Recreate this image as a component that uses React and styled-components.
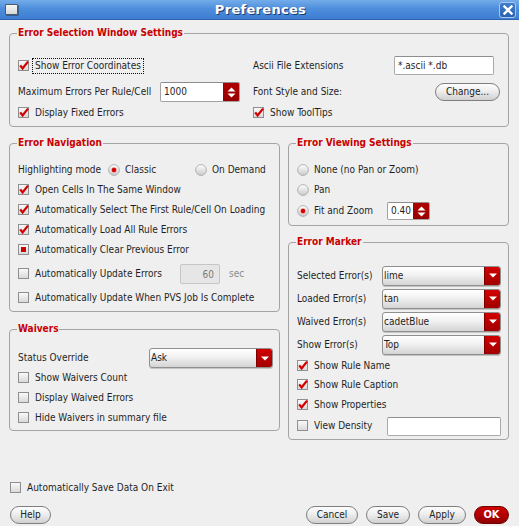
import React, { useId } from 'react';
import styled, { createGlobalStyle, css } from 'styled-components';

const FONT = `"DejaVu Sans Condensed", "DejaVu Sans", "Liberation Sans", sans-serif`;

const GlobalStyle = createGlobalStyle`
  html, body { margin: 0; padding: 0; background: #efefef; }
  body { font-family: ${FONT}; }
  * { box-sizing: border-box; }
`;

const Window = styled.div`
  width: 519px;
  height: 526px;
  display: flex;
  flex-direction: column;
  background: #efefef;
  color: #1f1f1f;
  font-family: ${FONT};
  font-size: 10px;
  line-height: 12px;
  overflow: hidden;
`;

const TitleBar = styled.div`
  flex: none;
  height: 20px;
  display: grid;
  grid-template-columns: 1fr auto 1fr;
  align-items: center;
  padding: 0 3px 0 5px;
  background: linear-gradient(#74ace9 0%, #4e8edc 45%, #3e7ed2 100%);
  border-bottom: 1px solid #2e64b0;
`;

const WindowIcon = styled.span`
  justify-self: start;
  width: 13px;
  height: 11px;
  border: 1px solid #505a66;
  border-radius: 1px;
  background: linear-gradient(#f6f6f6, #d6d6d6);
  box-shadow: 1px 1px 0 rgba(0, 0, 0, 0.3);
`;

const Title = styled.div`
  color: #ffffff;
  font-family: "DejaVu Sans", sans-serif;
  font-weight: bold;
  font-size: 13px;
  letter-spacing: 0.3px;
  text-shadow: 1px 1px 0 #1b3b6e;
`;

const CloseButton = styled.span`
  justify-self: end;
  width: 17px;
  height: 16px;
  display: flex;
  align-items: center;
  justify-content: center;
  border: 1px solid #a8c7ef;
  border-radius: 3px;
  background: linear-gradient(#3f7dcd, #2c63b0);
`;

const Body = styled.div`
  flex: 1;
  min-height: 0;
  display: flex;
  flex-direction: column;
  padding: 6px 10px 0 9px;
`;

const Group = styled.fieldset`
  margin: 0;
  min-width: 0;
  border: 1px solid #a4a4a4;
  border-radius: 4px;
  padding: ${(p) => p.$pt}px ${(p) => p.$pr ?? 8}px ${(p) => p.$pb}px 8px;
`;

const Legend = styled.legend`
  padding: 0 1px;
  margin-left: -1px;
  color: #c80000;
  font-weight: bold;
  font-size: 10px;
  line-height: 14px;
`;

const TopGrid = styled.div`
  display: grid;
  grid-template-columns: 235px 1fr;
  grid-template-rows: 27px 26px 16px;
  align-items: center;
`;

const Columns = styled.div`
  display: grid;
  grid-template-columns: 271px 221px;
  column-gap: 8px;
  margin-top: 9px;
  align-items: start;
`;

const Column = styled.div`
  display: flex;
  flex-direction: column;
  gap: ${(p) => p.$gap}px;
`;

const Row = styled.div`
  display: flex;
  align-items: center;
  height: ${(p) => p.$h ?? 20}px;
  white-space: nowrap;
`;

const Label = styled.span`
  flex: none;
  width: ${(p) => (p.$w ? `${p.$w}px` : 'auto')};
  white-space: nowrap;
`;

const ItemText = styled.span`
  white-space: nowrap;
  ${(p) =>
    p.$focused &&
    css`
      border: 1px dotted #111;
      padding: 1px 2px;
      margin-left: -3px;
    `}
`;

const Unit = styled.span`
  margin-left: 9px;
  color: #8c8c8c;
`;

const Mark = styled.svg`
  flex: none;
  margin-right: 5px;
  overflow: visible;
`;

const TextInput = styled.input`
  flex: none;
  width: ${(p) => p.$w}px;
  height: ${(p) => p.$h}px;
  margin: 0;
  padding: 0 3px;
  border: 1px solid #aaaaaa;
  border-top-color: #8e8e8e;
  border-radius: 2px;
  background: #ffffff;
  font: inherit;
  color: #1f1f1f;
  outline: none;
  ${(p) =>
    p.disabled &&
    css`
      background: #e6e6e6;
      border-color: #c6c6c6;
      color: #7a7a7a;
      text-align: right;
      padding-right: 5px;
    `}
`;

const SpinFrame = styled.div`
  flex: none;
  display: flex;
  width: ${(p) => p.$w}px;
  height: ${(p) => p.$h}px;
  border: 1px solid #a2a2a2;
  border-top-color: #8c8c8c;
  border-radius: 2px;
  background: #ffffff;
  overflow: hidden;
`;

const SpinValue = styled.span`
  flex: 1;
  display: flex;
  align-items: center;
  padding-left: 3px;
`;

const SpinArrows = styled.span`
  flex: none;
  width: 16px;
  display: flex;
  align-items: center;
  justify-content: center;
  background: linear-gradient(#b00000, #960000);
`;

const SelectFrame = styled.div`
  flex: none;
  display: flex;
  width: ${(p) => p.$w}px;
  height: 20px;
  border: 1px solid #8f8f8f;
  border-radius: 3px;
  background: linear-gradient(#ffffff 0%, #f3f3f3 40%, #d4d4d4 100%);
  box-shadow: 0 1px 0 #c4c4c4;
  overflow: hidden;
`;

const SelectValue = styled.span`
  flex: 1;
  display: flex;
  align-items: center;
  padding-left: 1px;
`;

const SelectArrow = styled.span`
  flex: none;
  width: 16px;
  display: flex;
  align-items: center;
  justify-content: center;
  border-left: 1px solid #7c0000;
  background: linear-gradient(#d20000, #a20000);
`;

const Button = styled.button`
  flex: none;
  width: ${(p) => p.$w}px;
  height: 18px;
  margin: 0;
  padding: 0;
  border: 1px solid #7f7f7f;
  border-radius: 9px;
  background: linear-gradient(#fdfdfd 0%, #eeeeee 45%, #d0d0d0 100%);
  font: inherit;
  color: #222222;
  ${(p) =>
    p.$primary &&
    css`
      border-color: #6e0000;
      background: linear-gradient(#d00000 0%, #b40000 50%, #8e0000 100%);
      color: #ffffff;
      font-weight: bold;
      font-size: 11px;
    `}
`;

const Footer = styled.div`
  flex: none;
  display: flex;
  flex-direction: column;
  padding: 0 10px 2px 10px;
`;

const ButtonBar = styled.div`
  display: flex;
  justify-content: space-between;
  align-items: center;
  height: 18px;
  margin-top: 10px;
`;

const ButtonGroup = styled.div`
  display: flex;
  gap: 8px;
`;

const RadioOption = styled.span`
  flex: none;
  display: flex;
  align-items: center;
  width: ${(p) => (p.$w ? `${p.$w}px` : 'auto')};
`;

function useSafeId() {
  return 'g' + useId().replace(/[^a-zA-Z0-9]/g, '');
}

function Checkbox({ state = 'off' }) {
  const id = useSafeId();
  return (
    <Mark width="12" height="12" viewBox="0 0 12 12">
      <defs>
        <linearGradient id={id} x1="0" y1="0" x2="0" y2="1">
          <stop offset="0" stopColor="#fbfbfb" />
          <stop offset="1" stopColor="#d8d8d8" />
        </linearGradient>
      </defs>
      <rect x="0.5" y="0.5" width="10" height="10" fill={`url(#${id})`} stroke="#8f8f8f" />
      {state === 'on' && (
        <path d="M2.2 5.4 L4.6 8.4 L10 1.6" fill="none" stroke="#d20000" strokeWidth="2.3" strokeLinejoin="miter" />
      )}
      {state === 'partial' && <rect x="3" y="3" width="5" height="5" fill="#d20000" />}
    </Mark>
  );
}

function Radio({ on }) {
  const id = useSafeId();
  return (
    <Mark width="12" height="12" viewBox="0 0 12 12">
      <defs>
        <linearGradient id={id} x1="0" y1="0" x2="0" y2="1">
          <stop offset="0" stopColor="#ffffff" />
          <stop offset="1" stopColor="#c9c9c9" />
        </linearGradient>
      </defs>
      <circle cx="6" cy="6" r="5.4" fill={`url(#${id})`} stroke="#a5a5a5" strokeWidth="0.8" />
      {on && <circle cx="6" cy="6" r="3" fill="#f2b3b3" />}
      {on && <circle cx="6" cy="6" r="2.2" fill="#d40000" />}
    </Mark>
  );
}

function CheckItem({ state = 'off', focused, h, children }) {
  return (
    <Row $h={h}>
      <Checkbox state={state} />
      <ItemText $focused={focused}>{children}</ItemText>
    </Row>
  );
}

function SpinBox({ value, w, h }) {
  return (
    <SpinFrame $w={w} $h={h}>
      <SpinValue>{value}</SpinValue>
      <SpinArrows>
        <svg width="9" height="13" viewBox="0 0 9 13">
          <polygon points="0.5,5.5 4.5,1.5 8.5,5.5" fill="#ffffff" />
          <polygon points="0.5,7.5 4.5,11.5 8.5,7.5" fill="#ffffff" />
        </svg>
      </SpinArrows>
    </SpinFrame>
  );
}

function Select({ value, w }) {
  return (
    <SelectFrame $w={w}>
      <SelectValue>{value}</SelectValue>
      <SelectArrow>
        <svg width="8" height="5" viewBox="0 0 8 5">
          <polygon points="0,0.5 8,0.5 4,4.5" fill="#ffffff" />
        </svg>
      </SelectArrow>
    </SelectFrame>
  );
}

export default function App() {
  return (
    <>
      <GlobalStyle />
      <Window>
        <TitleBar>
          <WindowIcon />
          <Title>Preferences</Title>
          <CloseButton aria-label="Close">
            <svg width="10" height="10" viewBox="0 0 10 10">
              <path d="M1.5 1.5 L8.5 8.5 M8.5 1.5 L1.5 8.5" stroke="#ffffff" strokeWidth="2.4" strokeLinecap="square" />
            </svg>
          </CloseButton>
        </TitleBar>

        <Body>
          <Group $pt={12} $pb={5}>
            <Legend>Error Selection Window Settings</Legend>
            <TopGrid>
              <CheckItem state="on" focused>Show Error Coordinates</CheckItem>
              <Row>
                <Label $w={141}>Ascii File Extensions</Label>
                <TextInput $w={100} $h={19} defaultValue="*.ascii *.db" />
              </Row>
              <Row>
                <Label $w={142}>Maximum Errors Per Rule/Cell</Label>
                <SpinBox value="1000" w={80} h={20} />
              </Row>
              <Row>
                <Label $w={182}>Font Style and Size:</Label>
                <Button $w={65}>Change...</Button>
              </Row>
              <CheckItem state="on" h={16}>Display Fixed Errors</CheckItem>
              <CheckItem state="on" h={16}>Show ToolTips</CheckItem>
            </TopGrid>
          </Group>

          <Columns>
            <Column $gap={10}>
              <Group $pt={10} $pb={3} $pr={6}>
                <Legend>Error Navigation</Legend>
                <Row>
                  <Label $w={90}>Highlighting mode</Label>
                  <RadioOption $w={87}>
                    <Radio on />
                    Classic
                  </RadioOption>
                  <RadioOption>
                    <Radio />
                    On Demand
                  </RadioOption>
                </Row>
                <CheckItem state="on">Open Cells In The Same Window</CheckItem>
                <CheckItem state="on">Automatically Select The First Rule/Cell On Loading</CheckItem>
                <CheckItem state="on">Automatically Load All Rule Errors</CheckItem>
                <CheckItem state="partial">Automatically Clear Previous Error</CheckItem>
                <Row $h={28}>
                  <Checkbox />
                  <Label $w={145}>Automatically Update Errors</Label>
                  <TextInput $w={40} $h={20} disabled defaultValue="60" />
                  <Unit>sec</Unit>
                </Row>
                <CheckItem>Automatically Update When PVS Job Is Complete</CheckItem>
              </Group>

              <Group $pt={12} $pb={2} $pr={6}>
                <Legend>Waivers</Legend>
                <Row>
                  <Label $w={131}>Status Override</Label>
                  <Select value="Ask" w={124} />
                </Row>
                <CheckItem>Show Waivers Count</CheckItem>
                <CheckItem>Display Waived Errors</CheckItem>
                <CheckItem>Hide Waivers in summary file</CheckItem>
              </Group>
            </Column>

            <Column $gap={9}>
              <Group $pt={10} $pb={3} $pr={7}>
                <Legend>Error Viewing Settings</Legend>
                <Row>
                  <Radio />
                  <Label>None (no Pan or Zoom)</Label>
                </Row>
                <Row>
                  <Radio />
                  <Label>Pan</Label>
                </Row>
                <Row $h={22}>
                  <Radio on />
                  <Label $w={73}>Fit and Zoom</Label>
                  <SpinBox value="0.40" w={43} h={18} />
                </Row>
              </Group>

              <Group $pt={15} $pb={2} $pr={7}>
                <Legend>Error Marker</Legend>
                <Row $h={23}>
                  <Label $w={85}>Selected Error(s)</Label>
                  <Select value="lime" w={119} />
                </Row>
                <Row $h={23}>
                  <Label $w={85}>Loaded Error(s)</Label>
                  <Select value="tan" w={119} />
                </Row>
                <Row $h={23}>
                  <Label $w={85}>Waived Error(s)</Label>
                  <Select value="cadetBlue" w={119} />
                </Row>
                <Row $h={23}>
                  <Label $w={85}>Show Error(s)</Label>
                  <Select value="Top" w={119} />
                </Row>
                <CheckItem state="on" h={19}>Show Rule Name</CheckItem>
                <CheckItem state="on">Show Rule Caption</CheckItem>
                <CheckItem state="on">Show Properties</CheckItem>
                <Row $h={22}>
                  <Checkbox />
                  <Label $w={73}>View Density</Label>
                  <TextInput $w={114} $h={19} defaultValue="" />
                </Row>
              </Group>
            </Column>
          </Columns>
        </Body>

        <Footer>
          <CheckItem h={16}>Automatically Save Data On Exit</CheckItem>
          <ButtonBar>
            <Button $w={41}>Help</Button>
            <ButtonGroup>
              <Button $w={52}>Cancel</Button>
              <Button $w={44}>Save</Button>
              <Button $w={48}>Apply</Button>
              <Button $w={35} $primary>OK</Button>
            </ButtonGroup>
          </ButtonBar>
        </Footer>
      </Window>
    </>
  );
}
